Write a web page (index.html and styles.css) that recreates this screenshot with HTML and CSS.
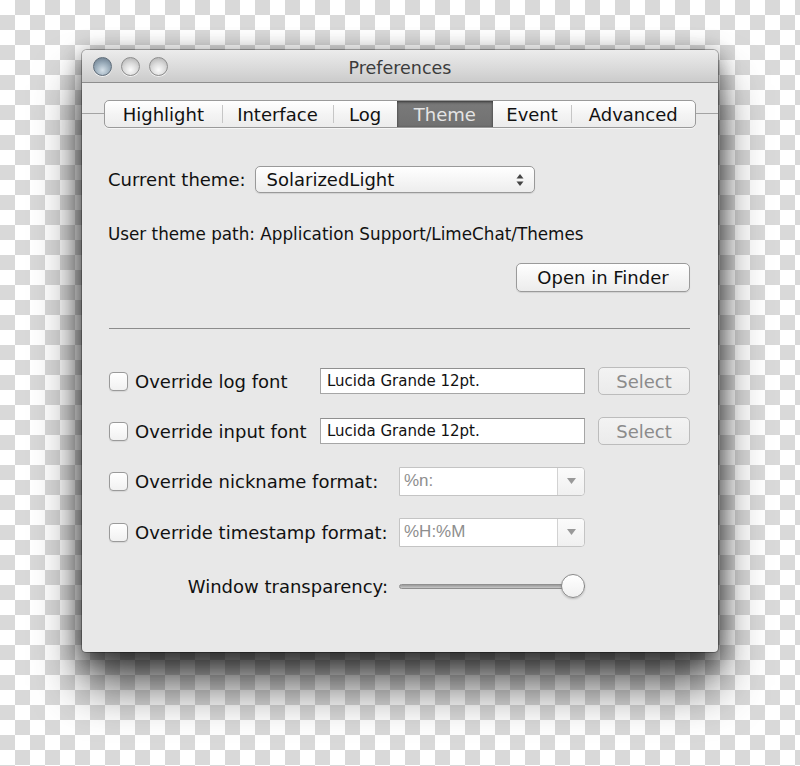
FILE: index.html
```html
<!DOCTYPE html>
<html lang="en">
<head>
    <meta charset="UTF-8">
    <title>Preferences</title>
    <link rel="stylesheet" href="styles.css">
</head>
<body>

<div class="window">
    <div class="titlebar">
        <div class="lights">
            <span class="light light-close"></span>
            <span class="light"></span>
            <span class="light"></span>
        </div>
        <div class="title">Preferences</div>
        <div></div>
    </div>

    <div class="tabs-row">
        <div class="tabs">
            <div class="tab tab-first" style="width: 117px">Highlight</div>
            <div class="tab" style="width: 112px">Interface</div>
            <div class="tab" style="width: 64px">Log</div>
            <div class="tab tab-active" style="width: 96px">Theme</div>
            <div class="tab tab-after-active" style="width: 79px">Event</div>
            <div class="tab" style="width: 124px">Advanced</div>
        </div>
    </div>

    <div class="content">
        <div class="theme-row">
            <span>Current theme:</span>
            <div class="popup">
                <span>SolarizedLight</span>
                <svg class="popup-arrows" width="8" height="14" viewBox="0 0 8 14">
                    <path d="M4 1 L7.5 5.5 L0.5 5.5 Z" fill="#444"/>
                    <path d="M4 13 L7.5 8.5 L0.5 8.5 Z" fill="#444"/>
                </svg>
            </div>
        </div>

        <div class="path-row">User theme path: Application Support/LimeChat/Themes</div>

        <div class="finder-row">
            <button class="button">Open in Finder</button>
        </div>

        <hr class="separator">

        <div class="option-row">
            <span class="checkbox"></span>
            <span class="label label-font">Override log font</span>
            <div class="textfield">Lucida Grande 12pt.</div>
            <button class="button button-disabled">Select</button>
        </div>

        <div class="option-row">
            <span class="checkbox"></span>
            <span class="label label-font">Override input font</span>
            <div class="textfield">Lucida Grande 12pt.</div>
            <button class="button button-disabled">Select</button>
        </div>

        <div class="option-row">
            <span class="checkbox"></span>
            <span class="label label-format">Override nickname format:</span>
            <div class="combo">
                <span class="combo-text">%n:</span>
                <span class="combo-button">
                    <svg width="9" height="6" viewBox="0 0 9 6"><path d="M0 0 L9 0 L4.5 6 Z" fill="#999"/></svg>
                </span>
            </div>
        </div>

        <div class="option-row option-row-wide">
            <span class="checkbox"></span>
            <span class="label label-format">Override timestamp format:</span>
            <div class="combo">
                <span class="combo-text">%H:%M</span>
                <span class="combo-button">
                    <svg width="9" height="6" viewBox="0 0 9 6"><path d="M0 0 L9 0 L4.5 6 Z" fill="#999"/></svg>
                </span>
            </div>
        </div>

        <div class="option-row slider-row">
            <span class="label label-slider">Window transparency:</span>
            <div class="slider">
                <div class="slider-track"></div>
                <div class="slider-knob"></div>
            </div>
        </div>
    </div>
</div>

</body>
</html>
```

FILE: styles.css
```css
body {
    margin: 0;
    width: 800px;
    height: 766px;
    overflow: hidden;
    font-family: "DejaVu Sans", Verdana, sans-serif;
    color: #111;
    /* transparency checkerboard */
    background: repeating-conic-gradient(#d9d9d9 0 25%, #ffffff 0 50%) 0 0 / 30px 30px;
    padding: 50px 0 0 82px;
    box-sizing: border-box;
}

.window {
    width: 636px;
    height: 602px;
    background-color: #e8e8e8;
    border-radius: 5px 5px 4px 4px;
    box-shadow: 0 0 0 1px rgba(0, 0, 0, 0.28),
                0 34px 48px rgba(0, 0, 0, 0.65),
                0 12px 22px rgba(0, 0, 0, 0.35),
                0 0 22px rgba(0, 0, 0, 0.25);
    display: flex;
    flex-direction: column;
}

/* Title bar */
.titlebar {
    height: 32px;
    display: grid;
    grid-template-columns: 1fr auto 1fr;
    align-items: center;
    background: linear-gradient(#ececec, #d9d9d9 60%, #cbcbcb);
    border-bottom: 1px solid #8e8e8e;
    border-radius: 5px 5px 0 0;
}

.lights {
    display: flex;
    gap: 9px;
    padding-left: 11px;
}

.light {
    width: 17px;
    height: 17px;
    border-radius: 50%;
    border: 1px solid #8d8d8d;
    background: radial-gradient(circle at 50% 70%, #fbfbfb 0, #dcdcdc 45%, #a9a9a9 100%);
    box-shadow: 0 1px 0 rgba(255, 255, 255, 0.7);
}

.light-close {
    border-color: #5f6d7a;
    background: radial-gradient(circle at 50% 72%, #d5e0e8 0, #9eb0be 45%, #617384 100%);
}

.title {
    font-size: 17.5px;
    color: #3c3c3c;
    padding-top: 3px;
}

/* Tabs */
.tabs-row {
    margin-top: 17px;
    padding-left: 22px;
    background: linear-gradient(#a3a3a3, #a3a3a3) left 13px / 100% 1px no-repeat;
}

.tabs {
    display: flex;
    width: 592px;
    height: 28px;
    box-sizing: border-box;
    border: 1px solid #9a9a9a;
    border-radius: 5px;
    background: linear-gradient(#ffffff, #f4f4f4 50%, #ececec);
    box-shadow: 0 1px 0 rgba(255, 255, 255, 0.6);
    overflow: hidden;
}

.tab {
    display: flex;
    justify-content: center;
    align-items: center;
    font-size: 18px;
    color: #111;
    box-sizing: border-box;
    background: linear-gradient(#c6c6c6, #c6c6c6) left center / 1px 18px no-repeat;
}

.tab-first,
.tab-after-active {
    background: none;
}

.tab-active {
    background: linear-gradient(#7a7a7a, #717171);
    color: #e4e4e4;
    box-shadow: inset 0 1px 3px rgba(0, 0, 0, 0.6);
}

/* Content */
.content {
    padding: 38px 28px 0 26px;
    display: flex;
    flex-direction: column;
    font-size: 18px;
}

.theme-row {
    display: flex;
    align-items: center;
    gap: 9px;
}

.popup {
    width: 280px;
    height: 27px;
    box-sizing: border-box;
    border: 1px solid #999;
    border-radius: 5px;
    background: linear-gradient(#ffffff, #f6f6f6 50%, #ededed);
    box-shadow: 0 1px 1px rgba(0, 0, 0, 0.1);
    display: flex;
    align-items: center;
    justify-content: space-between;
    padding: 0 10px 0 11px;
}

.path-row {
    margin-top: 30px;
    line-height: 22px;
    font-size: 16.8px;
}

.finder-row {
    display: flex;
    justify-content: flex-end;
    margin-top: 18px;
}

.button {
    font-family: "DejaVu Sans", Verdana, sans-serif;
    font-size: 18px;
    color: #111;
    height: 29px;
    padding: 0;
    border: 1px solid #9a9a9a;
    border-radius: 5px;
    background: linear-gradient(#ffffff, #f5f5f5 50%, #ececec);
    box-shadow: 0 1px 1px rgba(0, 0, 0, 0.1);
}

.finder-row .button {
    width: 174px;
}

.button-disabled {
    width: 92px;
    height: 28px;
    margin-left: 13px;
    color: #8b8b8b;
    border-color: #bcbcbc;
    background: linear-gradient(#f3f3f3, #ebebeb);
    box-shadow: none;
}

.separator {
    width: 581px;
    margin: 36px 0 0 1px;
    border: none;
    border-top: 1px solid #8c8c8c;
}

.option-row {
    display: flex;
    align-items: center;
    height: 30px;
    margin-top: 20px;
}

.separator + .option-row {
    margin-top: 37px;
}

.option-row-wide {
    margin-top: 21px;
}

.checkbox {
    width: 19px;
    height: 19px;
    box-sizing: border-box;
    margin-left: 1px;
    border: 1px solid #9a9a9a;
    border-radius: 4px;
    background: linear-gradient(#ffffff, #f1f1f1);
    box-shadow: 0 1px 1px rgba(0, 0, 0, 0.08);
}

.label {
    margin-left: 7px;
    white-space: nowrap;
}

.label-font {
    width: 185px;
}

.label-format {
    width: 264px;
}

.textfield {
    width: 265px;
    height: 26px;
    box-sizing: border-box;
    border: 1px solid #a6a6a6;
    border-top-color: #8f8f8f;
    background-color: #fff;
    font-size: 15px;
    display: flex;
    align-items: center;
    padding-left: 6px;
}

.combo {
    width: 186px;
    height: 29px;
    display: flex;
    box-sizing: border-box;
    border: 1px solid #c4c4c4;
    border-radius: 0 4px 4px 0;
    background-color: #fff;
}

.combo-text {
    flex: 1;
    display: flex;
    align-items: center;
    padding-left: 4px;
    font-family: "Liberation Sans", Arial, sans-serif;
    font-size: 17px;
    color: #8e8e8e;
}

.combo-button {
    width: 26px;
    display: flex;
    justify-content: center;
    align-items: center;
    border-left: 1px solid #d2d2d2;
    background: linear-gradient(#fbfbfb, #f0f0f0);
    border-radius: 0 4px 4px 0;
}

.slider-row {
    margin-top: 24px;
}

.label-slider {
    width: 280px;
    margin-left: 0;
    text-align: right;
}

.slider {
    position: relative;
    width: 186px;
    height: 26px;
    margin-left: 11px;
    display: flex;
    align-items: center;
}

.slider-track {
    width: 100%;
    height: 5px;
    border-radius: 3px;
    border: 1px solid #8f8f8f;
    background: linear-gradient(#9a9a9a, #c8c8c8);
    box-sizing: border-box;
}

.slider-knob {
    position: absolute;
    right: 0;
    top: 1px;
    width: 24px;
    height: 24px;
    box-sizing: border-box;
    border-radius: 50%;
    border: 1px solid #8a8a8a;
    background: linear-gradient(#ffffff, #f0f0f0);
    box-shadow: 0 1px 2px rgba(0, 0, 0, 0.2);
}
```
